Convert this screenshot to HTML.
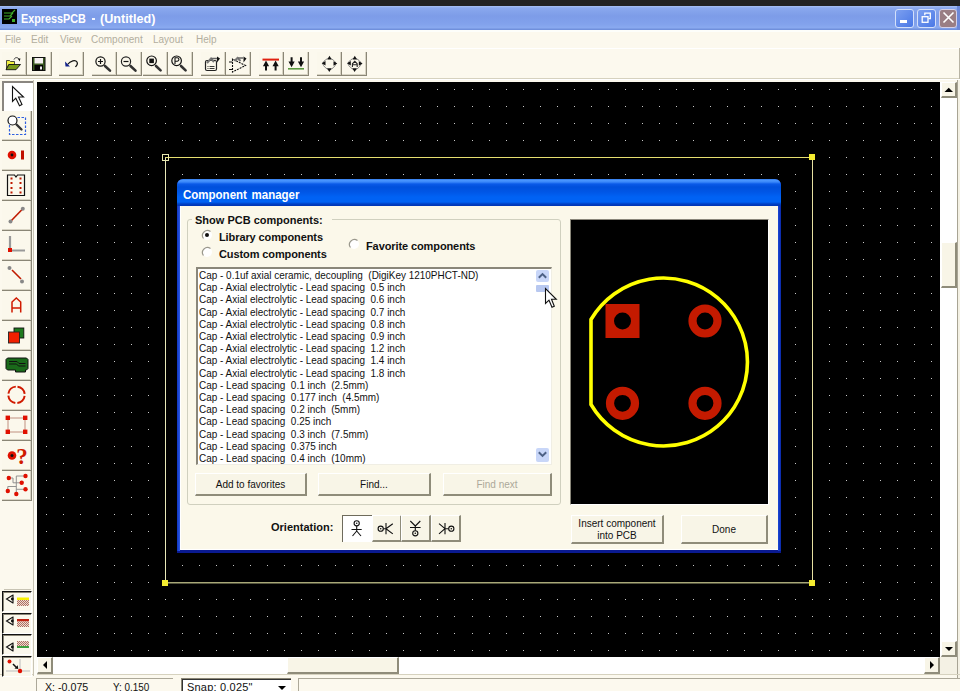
<!DOCTYPE html><html><head><meta charset="utf-8"><style>
*{margin:0;padding:0;box-sizing:border-box}
html,body{width:960px;height:691px;overflow:hidden;background:#fcf9ee;font-family:"Liberation Sans",sans-serif;}
.a{position:absolute}
.t{position:absolute;white-space:pre;line-height:1}
.tb{position:absolute;top:52px;height:24px;border-right:1px solid #8a8676;border-bottom:1px solid #8a8676;box-shadow:inset -1px -1px 0 #d8d4c4;background:#fbf8ec}
.lb{position:absolute;left:2px;width:30px;height:30px;border-right:1px solid #8a8676;border-bottom:1px solid #8a8676;box-shadow:inset -1px -1px 0 #d8d4c4;background:#fbf8ec}
.btn{position:absolute;border-top:1px solid #fff;border-left:1px solid #fff;border-right:2px solid #8f8c7a;border-bottom:2px solid #8f8c7a;background:#f8f5e7;font-size:10px;color:#111;text-align:center;}
.li{position:absolute;left:199px;font-size:11px;white-space:pre;transform:scaleX(0.905);transform-origin:0 0;color:#111;line-height:12px}
svg{position:absolute;overflow:visible}
</style></head><body>
<div class="a" style="left:0;top:0;width:960px;height:6px;background:#222"></div>
<div class="a" style="left:0;top:6px;width:960px;height:24px;background:linear-gradient(#a8c0f4 0px,#8aa8ee 2px,#7d9ce8 10px,#82a2ec 18px,#8aaaf0 22px,#7090dc 23px,#7090dc 24px)"></div>
<div class="a" style="left:957px;top:6px;width:3px;height:24px;background:#6c88d8"></div>
<svg style="left:2px;top:9px" width="15" height="16" viewBox="0 0 15 16"><rect x="0" y="0" width="15" height="15" fill="#000"/><path d="M2 4h8l3-3M2 7h6l3-3M2 10h5l3-3" stroke="#3fae28" stroke-width="1.2" fill="none"/><rect x="10" y="10" width="3" height="3" fill="#3fae28"/></svg>
<div class="t" style="left:21px;top:12px;font-size:13px;font-weight:bold;color:#fff;transform:scaleX(0.83);transform-origin:0 0">ExpressPCB</div>
<div class="a" style="left:92px;top:18px;width:3px;height:2px;background:#f0f4ff"></div>
<div class="t" style="left:99.5px;top:12px;font-size:13px;font-weight:bold;color:#fff;transform:scaleX(0.97);transform-origin:0 0">(Untitled)</div>
<div class="a" style="left:895px;top:9px;width:19px;height:19px;border:1px solid #d4e0fa;border-radius:3px;background:linear-gradient(135deg,#7da0f0,#4a78e6)"></div>
<div class="a" style="left:917px;top:9px;width:19px;height:19px;border:1px solid #d4e0fa;border-radius:3px;background:linear-gradient(135deg,#7da0f0,#4a78e6)"></div>
<div class="a" style="left:939px;top:9px;width:18px;height:19px;border:1px solid #d4d0e8;border-radius:3px;background:#9a7e84"></div>
<div class="a" style="left:900px;top:20px;width:7px;height:3px;background:#fff"></div>
<svg style="left:921px;top:12px" width="12" height="12"><rect x="1.2" y="4.7" width="5.8" height="5.6" fill="none" stroke="#fff" stroke-width="1.3"/><path d="M3.8 3.2V1.2h5.5v5.4H7.5" fill="none" stroke="#fff" stroke-width="1.3"/></svg>
<svg style="left:942px;top:11px" width="14" height="14"><path d="M1.5 1.5l10 10M11.5 1.5l-10 10" stroke="#fff" stroke-width="1.6"/></svg>
<div class="t" style="left:5px;top:35px;font-size:10px;color:#b2ae9e">File</div>
<div class="t" style="left:31px;top:35px;font-size:10px;color:#b2ae9e">Edit</div>
<div class="t" style="left:60px;top:35px;font-size:10px;color:#b2ae9e">View</div>
<div class="t" style="left:91px;top:35px;font-size:10px;color:#b2ae9e">Component</div>
<div class="t" style="left:153px;top:35px;font-size:10px;color:#b2ae9e">Layout</div>
<div class="t" style="left:196px;top:35px;font-size:10px;color:#b2ae9e">Help</div>
<div class="a" style="left:0;top:48px;width:960px;height:1px;background:#fff"></div>
<div class="a" style="left:0;top:30px;width:960px;height:2px;background:#fdfefa"></div>
<div class="a" style="left:0;top:78px;width:960px;height:1px;background:#d6d2bf"></div>
<div class="a" style="left:0;top:79px;width:960px;height:1px;background:#fff"></div>
<div class="tb" style="left:2px;width:25px"></div>
<div class="tb" style="left:27px;width:25px"></div>
<div class="tb" style="left:59px;width:25px"></div>
<div class="tb" style="left:92px;width:25px"></div>
<div class="tb" style="left:117px;width:25px"></div>
<div class="tb" style="left:143px;width:25px"></div>
<div class="tb" style="left:168px;width:25px"></div>
<div class="tb" style="left:201px;width:25px"></div>
<div class="tb" style="left:226px;width:25px"></div>
<div class="tb" style="left:259px;width:25px"></div>
<div class="tb" style="left:284px;width:25px"></div>
<div class="tb" style="left:317px;width:25px"></div>
<div class="tb" style="left:342px;width:25px"></div>
<div class="a" style="left:37px;top:82px;width:903px;height:575px;background:#000"></div>
<svg style="left:0;top:0" width="960" height="691"><path d="M46 89h1v1h-1zM46 106h1v1h-1zM46 123h1v1h-1zM46 140h1v1h-1zM46 157h1v1h-1zM46 174h1v1h-1zM46 191h1v1h-1zM46 208h1v1h-1zM46 225h1v1h-1zM46 242h1v1h-1zM46 259h1v1h-1zM46 276h1v1h-1zM46 293h1v1h-1zM46 310h1v1h-1zM46 327h1v1h-1zM46 344h1v1h-1zM46 361h1v1h-1zM46 378h1v1h-1zM46 395h1v1h-1zM46 412h1v1h-1zM46 429h1v1h-1zM46 446h1v1h-1zM46 463h1v1h-1zM46 480h1v1h-1zM46 497h1v1h-1zM46 514h1v1h-1zM46 531h1v1h-1zM46 548h1v1h-1zM46 565h1v1h-1zM46 582h1v1h-1zM46 599h1v1h-1zM46 616h1v1h-1zM46 633h1v1h-1zM46 650h1v1h-1zM63 89h1v1h-1zM63 106h1v1h-1zM63 123h1v1h-1zM63 140h1v1h-1zM63 157h1v1h-1zM63 174h1v1h-1zM63 191h1v1h-1zM63 208h1v1h-1zM63 225h1v1h-1zM63 242h1v1h-1zM63 259h1v1h-1zM63 276h1v1h-1zM63 293h1v1h-1zM63 310h1v1h-1zM63 327h1v1h-1zM63 344h1v1h-1zM63 361h1v1h-1zM63 378h1v1h-1zM63 395h1v1h-1zM63 412h1v1h-1zM63 429h1v1h-1zM63 446h1v1h-1zM63 463h1v1h-1zM63 480h1v1h-1zM63 497h1v1h-1zM63 514h1v1h-1zM63 531h1v1h-1zM63 548h1v1h-1zM63 565h1v1h-1zM63 582h1v1h-1zM63 599h1v1h-1zM63 616h1v1h-1zM63 633h1v1h-1zM63 650h1v1h-1zM80 89h1v1h-1zM80 106h1v1h-1zM80 123h1v1h-1zM80 140h1v1h-1zM80 157h1v1h-1zM80 174h1v1h-1zM80 191h1v1h-1zM80 208h1v1h-1zM80 225h1v1h-1zM80 242h1v1h-1zM80 259h1v1h-1zM80 276h1v1h-1zM80 293h1v1h-1zM80 310h1v1h-1zM80 327h1v1h-1zM80 344h1v1h-1zM80 361h1v1h-1zM80 378h1v1h-1zM80 395h1v1h-1zM80 412h1v1h-1zM80 429h1v1h-1zM80 446h1v1h-1zM80 463h1v1h-1zM80 480h1v1h-1zM80 497h1v1h-1zM80 514h1v1h-1zM80 531h1v1h-1zM80 548h1v1h-1zM80 565h1v1h-1zM80 582h1v1h-1zM80 599h1v1h-1zM80 616h1v1h-1zM80 633h1v1h-1zM80 650h1v1h-1zM97 89h1v1h-1zM97 106h1v1h-1zM97 123h1v1h-1zM97 140h1v1h-1zM97 157h1v1h-1zM97 174h1v1h-1zM97 191h1v1h-1zM97 208h1v1h-1zM97 225h1v1h-1zM97 242h1v1h-1zM97 259h1v1h-1zM97 276h1v1h-1zM97 293h1v1h-1zM97 310h1v1h-1zM97 327h1v1h-1zM97 344h1v1h-1zM97 361h1v1h-1zM97 378h1v1h-1zM97 395h1v1h-1zM97 412h1v1h-1zM97 429h1v1h-1zM97 446h1v1h-1zM97 463h1v1h-1zM97 480h1v1h-1zM97 497h1v1h-1zM97 514h1v1h-1zM97 531h1v1h-1zM97 548h1v1h-1zM97 565h1v1h-1zM97 582h1v1h-1zM97 599h1v1h-1zM97 616h1v1h-1zM97 633h1v1h-1zM97 650h1v1h-1zM114 89h1v1h-1zM114 106h1v1h-1zM114 123h1v1h-1zM114 140h1v1h-1zM114 157h1v1h-1zM114 174h1v1h-1zM114 191h1v1h-1zM114 208h1v1h-1zM114 225h1v1h-1zM114 242h1v1h-1zM114 259h1v1h-1zM114 276h1v1h-1zM114 293h1v1h-1zM114 310h1v1h-1zM114 327h1v1h-1zM114 344h1v1h-1zM114 361h1v1h-1zM114 378h1v1h-1zM114 395h1v1h-1zM114 412h1v1h-1zM114 429h1v1h-1zM114 446h1v1h-1zM114 463h1v1h-1zM114 480h1v1h-1zM114 497h1v1h-1zM114 514h1v1h-1zM114 531h1v1h-1zM114 548h1v1h-1zM114 565h1v1h-1zM114 582h1v1h-1zM114 599h1v1h-1zM114 616h1v1h-1zM114 633h1v1h-1zM114 650h1v1h-1zM131 89h1v1h-1zM131 106h1v1h-1zM131 123h1v1h-1zM131 140h1v1h-1zM131 157h1v1h-1zM131 174h1v1h-1zM131 191h1v1h-1zM131 208h1v1h-1zM131 225h1v1h-1zM131 242h1v1h-1zM131 259h1v1h-1zM131 276h1v1h-1zM131 293h1v1h-1zM131 310h1v1h-1zM131 327h1v1h-1zM131 344h1v1h-1zM131 361h1v1h-1zM131 378h1v1h-1zM131 395h1v1h-1zM131 412h1v1h-1zM131 429h1v1h-1zM131 446h1v1h-1zM131 463h1v1h-1zM131 480h1v1h-1zM131 497h1v1h-1zM131 514h1v1h-1zM131 531h1v1h-1zM131 548h1v1h-1zM131 565h1v1h-1zM131 582h1v1h-1zM131 599h1v1h-1zM131 616h1v1h-1zM131 633h1v1h-1zM131 650h1v1h-1zM148 89h1v1h-1zM148 106h1v1h-1zM148 123h1v1h-1zM148 140h1v1h-1zM148 157h1v1h-1zM148 174h1v1h-1zM148 191h1v1h-1zM148 208h1v1h-1zM148 225h1v1h-1zM148 242h1v1h-1zM148 259h1v1h-1zM148 276h1v1h-1zM148 293h1v1h-1zM148 310h1v1h-1zM148 327h1v1h-1zM148 344h1v1h-1zM148 361h1v1h-1zM148 378h1v1h-1zM148 395h1v1h-1zM148 412h1v1h-1zM148 429h1v1h-1zM148 446h1v1h-1zM148 463h1v1h-1zM148 480h1v1h-1zM148 497h1v1h-1zM148 514h1v1h-1zM148 531h1v1h-1zM148 548h1v1h-1zM148 565h1v1h-1zM148 582h1v1h-1zM148 599h1v1h-1zM148 616h1v1h-1zM148 633h1v1h-1zM148 650h1v1h-1zM165 89h1v1h-1zM165 106h1v1h-1zM165 123h1v1h-1zM165 140h1v1h-1zM165 157h1v1h-1zM165 174h1v1h-1zM165 191h1v1h-1zM165 208h1v1h-1zM165 225h1v1h-1zM165 242h1v1h-1zM165 259h1v1h-1zM165 276h1v1h-1zM165 293h1v1h-1zM165 310h1v1h-1zM165 327h1v1h-1zM165 344h1v1h-1zM165 361h1v1h-1zM165 378h1v1h-1zM165 395h1v1h-1zM165 412h1v1h-1zM165 429h1v1h-1zM165 446h1v1h-1zM165 463h1v1h-1zM165 480h1v1h-1zM165 497h1v1h-1zM165 514h1v1h-1zM165 531h1v1h-1zM165 548h1v1h-1zM165 565h1v1h-1zM165 582h1v1h-1zM165 599h1v1h-1zM165 616h1v1h-1zM165 633h1v1h-1zM165 650h1v1h-1zM182 89h1v1h-1zM182 106h1v1h-1zM182 123h1v1h-1zM182 140h1v1h-1zM182 157h1v1h-1zM182 174h1v1h-1zM182 191h1v1h-1zM182 208h1v1h-1zM182 225h1v1h-1zM182 242h1v1h-1zM182 259h1v1h-1zM182 276h1v1h-1zM182 293h1v1h-1zM182 310h1v1h-1zM182 327h1v1h-1zM182 344h1v1h-1zM182 361h1v1h-1zM182 378h1v1h-1zM182 395h1v1h-1zM182 412h1v1h-1zM182 429h1v1h-1zM182 446h1v1h-1zM182 463h1v1h-1zM182 480h1v1h-1zM182 497h1v1h-1zM182 514h1v1h-1zM182 531h1v1h-1zM182 548h1v1h-1zM182 565h1v1h-1zM182 582h1v1h-1zM182 599h1v1h-1zM182 616h1v1h-1zM182 633h1v1h-1zM182 650h1v1h-1zM199 89h1v1h-1zM199 106h1v1h-1zM199 123h1v1h-1zM199 140h1v1h-1zM199 157h1v1h-1zM199 174h1v1h-1zM199 191h1v1h-1zM199 208h1v1h-1zM199 225h1v1h-1zM199 242h1v1h-1zM199 259h1v1h-1zM199 276h1v1h-1zM199 293h1v1h-1zM199 310h1v1h-1zM199 327h1v1h-1zM199 344h1v1h-1zM199 361h1v1h-1zM199 378h1v1h-1zM199 395h1v1h-1zM199 412h1v1h-1zM199 429h1v1h-1zM199 446h1v1h-1zM199 463h1v1h-1zM199 480h1v1h-1zM199 497h1v1h-1zM199 514h1v1h-1zM199 531h1v1h-1zM199 548h1v1h-1zM199 565h1v1h-1zM199 582h1v1h-1zM199 599h1v1h-1zM199 616h1v1h-1zM199 633h1v1h-1zM199 650h1v1h-1zM216 89h1v1h-1zM216 106h1v1h-1zM216 123h1v1h-1zM216 140h1v1h-1zM216 157h1v1h-1zM216 174h1v1h-1zM216 191h1v1h-1zM216 208h1v1h-1zM216 225h1v1h-1zM216 242h1v1h-1zM216 259h1v1h-1zM216 276h1v1h-1zM216 293h1v1h-1zM216 310h1v1h-1zM216 327h1v1h-1zM216 344h1v1h-1zM216 361h1v1h-1zM216 378h1v1h-1zM216 395h1v1h-1zM216 412h1v1h-1zM216 429h1v1h-1zM216 446h1v1h-1zM216 463h1v1h-1zM216 480h1v1h-1zM216 497h1v1h-1zM216 514h1v1h-1zM216 531h1v1h-1zM216 548h1v1h-1zM216 565h1v1h-1zM216 582h1v1h-1zM216 599h1v1h-1zM216 616h1v1h-1zM216 633h1v1h-1zM216 650h1v1h-1zM233 89h1v1h-1zM233 106h1v1h-1zM233 123h1v1h-1zM233 140h1v1h-1zM233 157h1v1h-1zM233 174h1v1h-1zM233 191h1v1h-1zM233 208h1v1h-1zM233 225h1v1h-1zM233 242h1v1h-1zM233 259h1v1h-1zM233 276h1v1h-1zM233 293h1v1h-1zM233 310h1v1h-1zM233 327h1v1h-1zM233 344h1v1h-1zM233 361h1v1h-1zM233 378h1v1h-1zM233 395h1v1h-1zM233 412h1v1h-1zM233 429h1v1h-1zM233 446h1v1h-1zM233 463h1v1h-1zM233 480h1v1h-1zM233 497h1v1h-1zM233 514h1v1h-1zM233 531h1v1h-1zM233 548h1v1h-1zM233 565h1v1h-1zM233 582h1v1h-1zM233 599h1v1h-1zM233 616h1v1h-1zM233 633h1v1h-1zM233 650h1v1h-1zM250 89h1v1h-1zM250 106h1v1h-1zM250 123h1v1h-1zM250 140h1v1h-1zM250 157h1v1h-1zM250 174h1v1h-1zM250 191h1v1h-1zM250 208h1v1h-1zM250 225h1v1h-1zM250 242h1v1h-1zM250 259h1v1h-1zM250 276h1v1h-1zM250 293h1v1h-1zM250 310h1v1h-1zM250 327h1v1h-1zM250 344h1v1h-1zM250 361h1v1h-1zM250 378h1v1h-1zM250 395h1v1h-1zM250 412h1v1h-1zM250 429h1v1h-1zM250 446h1v1h-1zM250 463h1v1h-1zM250 480h1v1h-1zM250 497h1v1h-1zM250 514h1v1h-1zM250 531h1v1h-1zM250 548h1v1h-1zM250 565h1v1h-1zM250 582h1v1h-1zM250 599h1v1h-1zM250 616h1v1h-1zM250 633h1v1h-1zM250 650h1v1h-1zM267 89h1v1h-1zM267 106h1v1h-1zM267 123h1v1h-1zM267 140h1v1h-1zM267 157h1v1h-1zM267 174h1v1h-1zM267 191h1v1h-1zM267 208h1v1h-1zM267 225h1v1h-1zM267 242h1v1h-1zM267 259h1v1h-1zM267 276h1v1h-1zM267 293h1v1h-1zM267 310h1v1h-1zM267 327h1v1h-1zM267 344h1v1h-1zM267 361h1v1h-1zM267 378h1v1h-1zM267 395h1v1h-1zM267 412h1v1h-1zM267 429h1v1h-1zM267 446h1v1h-1zM267 463h1v1h-1zM267 480h1v1h-1zM267 497h1v1h-1zM267 514h1v1h-1zM267 531h1v1h-1zM267 548h1v1h-1zM267 565h1v1h-1zM267 582h1v1h-1zM267 599h1v1h-1zM267 616h1v1h-1zM267 633h1v1h-1zM267 650h1v1h-1zM284 89h1v1h-1zM284 106h1v1h-1zM284 123h1v1h-1zM284 140h1v1h-1zM284 157h1v1h-1zM284 174h1v1h-1zM284 191h1v1h-1zM284 208h1v1h-1zM284 225h1v1h-1zM284 242h1v1h-1zM284 259h1v1h-1zM284 276h1v1h-1zM284 293h1v1h-1zM284 310h1v1h-1zM284 327h1v1h-1zM284 344h1v1h-1zM284 361h1v1h-1zM284 378h1v1h-1zM284 395h1v1h-1zM284 412h1v1h-1zM284 429h1v1h-1zM284 446h1v1h-1zM284 463h1v1h-1zM284 480h1v1h-1zM284 497h1v1h-1zM284 514h1v1h-1zM284 531h1v1h-1zM284 548h1v1h-1zM284 565h1v1h-1zM284 582h1v1h-1zM284 599h1v1h-1zM284 616h1v1h-1zM284 633h1v1h-1zM284 650h1v1h-1zM301 89h1v1h-1zM301 106h1v1h-1zM301 123h1v1h-1zM301 140h1v1h-1zM301 157h1v1h-1zM301 174h1v1h-1zM301 191h1v1h-1zM301 208h1v1h-1zM301 225h1v1h-1zM301 242h1v1h-1zM301 259h1v1h-1zM301 276h1v1h-1zM301 293h1v1h-1zM301 310h1v1h-1zM301 327h1v1h-1zM301 344h1v1h-1zM301 361h1v1h-1zM301 378h1v1h-1zM301 395h1v1h-1zM301 412h1v1h-1zM301 429h1v1h-1zM301 446h1v1h-1zM301 463h1v1h-1zM301 480h1v1h-1zM301 497h1v1h-1zM301 514h1v1h-1zM301 531h1v1h-1zM301 548h1v1h-1zM301 565h1v1h-1zM301 582h1v1h-1zM301 599h1v1h-1zM301 616h1v1h-1zM301 633h1v1h-1zM301 650h1v1h-1zM318 89h1v1h-1zM318 106h1v1h-1zM318 123h1v1h-1zM318 140h1v1h-1zM318 157h1v1h-1zM318 174h1v1h-1zM318 191h1v1h-1zM318 208h1v1h-1zM318 225h1v1h-1zM318 242h1v1h-1zM318 259h1v1h-1zM318 276h1v1h-1zM318 293h1v1h-1zM318 310h1v1h-1zM318 327h1v1h-1zM318 344h1v1h-1zM318 361h1v1h-1zM318 378h1v1h-1zM318 395h1v1h-1zM318 412h1v1h-1zM318 429h1v1h-1zM318 446h1v1h-1zM318 463h1v1h-1zM318 480h1v1h-1zM318 497h1v1h-1zM318 514h1v1h-1zM318 531h1v1h-1zM318 548h1v1h-1zM318 565h1v1h-1zM318 582h1v1h-1zM318 599h1v1h-1zM318 616h1v1h-1zM318 633h1v1h-1zM318 650h1v1h-1zM335 89h1v1h-1zM335 106h1v1h-1zM335 123h1v1h-1zM335 140h1v1h-1zM335 157h1v1h-1zM335 174h1v1h-1zM335 191h1v1h-1zM335 208h1v1h-1zM335 225h1v1h-1zM335 242h1v1h-1zM335 259h1v1h-1zM335 276h1v1h-1zM335 293h1v1h-1zM335 310h1v1h-1zM335 327h1v1h-1zM335 344h1v1h-1zM335 361h1v1h-1zM335 378h1v1h-1zM335 395h1v1h-1zM335 412h1v1h-1zM335 429h1v1h-1zM335 446h1v1h-1zM335 463h1v1h-1zM335 480h1v1h-1zM335 497h1v1h-1zM335 514h1v1h-1zM335 531h1v1h-1zM335 548h1v1h-1zM335 565h1v1h-1zM335 582h1v1h-1zM335 599h1v1h-1zM335 616h1v1h-1zM335 633h1v1h-1zM335 650h1v1h-1zM352 89h1v1h-1zM352 106h1v1h-1zM352 123h1v1h-1zM352 140h1v1h-1zM352 157h1v1h-1zM352 174h1v1h-1zM352 191h1v1h-1zM352 208h1v1h-1zM352 225h1v1h-1zM352 242h1v1h-1zM352 259h1v1h-1zM352 276h1v1h-1zM352 293h1v1h-1zM352 310h1v1h-1zM352 327h1v1h-1zM352 344h1v1h-1zM352 361h1v1h-1zM352 378h1v1h-1zM352 395h1v1h-1zM352 412h1v1h-1zM352 429h1v1h-1zM352 446h1v1h-1zM352 463h1v1h-1zM352 480h1v1h-1zM352 497h1v1h-1zM352 514h1v1h-1zM352 531h1v1h-1zM352 548h1v1h-1zM352 565h1v1h-1zM352 582h1v1h-1zM352 599h1v1h-1zM352 616h1v1h-1zM352 633h1v1h-1zM352 650h1v1h-1zM369 89h1v1h-1zM369 106h1v1h-1zM369 123h1v1h-1zM369 140h1v1h-1zM369 157h1v1h-1zM369 174h1v1h-1zM369 191h1v1h-1zM369 208h1v1h-1zM369 225h1v1h-1zM369 242h1v1h-1zM369 259h1v1h-1zM369 276h1v1h-1zM369 293h1v1h-1zM369 310h1v1h-1zM369 327h1v1h-1zM369 344h1v1h-1zM369 361h1v1h-1zM369 378h1v1h-1zM369 395h1v1h-1zM369 412h1v1h-1zM369 429h1v1h-1zM369 446h1v1h-1zM369 463h1v1h-1zM369 480h1v1h-1zM369 497h1v1h-1zM369 514h1v1h-1zM369 531h1v1h-1zM369 548h1v1h-1zM369 565h1v1h-1zM369 582h1v1h-1zM369 599h1v1h-1zM369 616h1v1h-1zM369 633h1v1h-1zM369 650h1v1h-1zM386 89h1v1h-1zM386 106h1v1h-1zM386 123h1v1h-1zM386 140h1v1h-1zM386 157h1v1h-1zM386 174h1v1h-1zM386 191h1v1h-1zM386 208h1v1h-1zM386 225h1v1h-1zM386 242h1v1h-1zM386 259h1v1h-1zM386 276h1v1h-1zM386 293h1v1h-1zM386 310h1v1h-1zM386 327h1v1h-1zM386 344h1v1h-1zM386 361h1v1h-1zM386 378h1v1h-1zM386 395h1v1h-1zM386 412h1v1h-1zM386 429h1v1h-1zM386 446h1v1h-1zM386 463h1v1h-1zM386 480h1v1h-1zM386 497h1v1h-1zM386 514h1v1h-1zM386 531h1v1h-1zM386 548h1v1h-1zM386 565h1v1h-1zM386 582h1v1h-1zM386 599h1v1h-1zM386 616h1v1h-1zM386 633h1v1h-1zM386 650h1v1h-1zM403 89h1v1h-1zM403 106h1v1h-1zM403 123h1v1h-1zM403 140h1v1h-1zM403 157h1v1h-1zM403 174h1v1h-1zM403 191h1v1h-1zM403 208h1v1h-1zM403 225h1v1h-1zM403 242h1v1h-1zM403 259h1v1h-1zM403 276h1v1h-1zM403 293h1v1h-1zM403 310h1v1h-1zM403 327h1v1h-1zM403 344h1v1h-1zM403 361h1v1h-1zM403 378h1v1h-1zM403 395h1v1h-1zM403 412h1v1h-1zM403 429h1v1h-1zM403 446h1v1h-1zM403 463h1v1h-1zM403 480h1v1h-1zM403 497h1v1h-1zM403 514h1v1h-1zM403 531h1v1h-1zM403 548h1v1h-1zM403 565h1v1h-1zM403 582h1v1h-1zM403 599h1v1h-1zM403 616h1v1h-1zM403 633h1v1h-1zM403 650h1v1h-1zM420 89h1v1h-1zM420 106h1v1h-1zM420 123h1v1h-1zM420 140h1v1h-1zM420 157h1v1h-1zM420 174h1v1h-1zM420 191h1v1h-1zM420 208h1v1h-1zM420 225h1v1h-1zM420 242h1v1h-1zM420 259h1v1h-1zM420 276h1v1h-1zM420 293h1v1h-1zM420 310h1v1h-1zM420 327h1v1h-1zM420 344h1v1h-1zM420 361h1v1h-1zM420 378h1v1h-1zM420 395h1v1h-1zM420 412h1v1h-1zM420 429h1v1h-1zM420 446h1v1h-1zM420 463h1v1h-1zM420 480h1v1h-1zM420 497h1v1h-1zM420 514h1v1h-1zM420 531h1v1h-1zM420 548h1v1h-1zM420 565h1v1h-1zM420 582h1v1h-1zM420 599h1v1h-1zM420 616h1v1h-1zM420 633h1v1h-1zM420 650h1v1h-1zM437 89h1v1h-1zM437 106h1v1h-1zM437 123h1v1h-1zM437 140h1v1h-1zM437 157h1v1h-1zM437 174h1v1h-1zM437 191h1v1h-1zM437 208h1v1h-1zM437 225h1v1h-1zM437 242h1v1h-1zM437 259h1v1h-1zM437 276h1v1h-1zM437 293h1v1h-1zM437 310h1v1h-1zM437 327h1v1h-1zM437 344h1v1h-1zM437 361h1v1h-1zM437 378h1v1h-1zM437 395h1v1h-1zM437 412h1v1h-1zM437 429h1v1h-1zM437 446h1v1h-1zM437 463h1v1h-1zM437 480h1v1h-1zM437 497h1v1h-1zM437 514h1v1h-1zM437 531h1v1h-1zM437 548h1v1h-1zM437 565h1v1h-1zM437 582h1v1h-1zM437 599h1v1h-1zM437 616h1v1h-1zM437 633h1v1h-1zM437 650h1v1h-1zM454 89h1v1h-1zM454 106h1v1h-1zM454 123h1v1h-1zM454 140h1v1h-1zM454 157h1v1h-1zM454 174h1v1h-1zM454 191h1v1h-1zM454 208h1v1h-1zM454 225h1v1h-1zM454 242h1v1h-1zM454 259h1v1h-1zM454 276h1v1h-1zM454 293h1v1h-1zM454 310h1v1h-1zM454 327h1v1h-1zM454 344h1v1h-1zM454 361h1v1h-1zM454 378h1v1h-1zM454 395h1v1h-1zM454 412h1v1h-1zM454 429h1v1h-1zM454 446h1v1h-1zM454 463h1v1h-1zM454 480h1v1h-1zM454 497h1v1h-1zM454 514h1v1h-1zM454 531h1v1h-1zM454 548h1v1h-1zM454 565h1v1h-1zM454 582h1v1h-1zM454 599h1v1h-1zM454 616h1v1h-1zM454 633h1v1h-1zM454 650h1v1h-1zM472 89h1v1h-1zM472 106h1v1h-1zM472 123h1v1h-1zM472 140h1v1h-1zM472 157h1v1h-1zM472 174h1v1h-1zM472 191h1v1h-1zM472 208h1v1h-1zM472 225h1v1h-1zM472 242h1v1h-1zM472 259h1v1h-1zM472 276h1v1h-1zM472 293h1v1h-1zM472 310h1v1h-1zM472 327h1v1h-1zM472 344h1v1h-1zM472 361h1v1h-1zM472 378h1v1h-1zM472 395h1v1h-1zM472 412h1v1h-1zM472 429h1v1h-1zM472 446h1v1h-1zM472 463h1v1h-1zM472 480h1v1h-1zM472 497h1v1h-1zM472 514h1v1h-1zM472 531h1v1h-1zM472 548h1v1h-1zM472 565h1v1h-1zM472 582h1v1h-1zM472 599h1v1h-1zM472 616h1v1h-1zM472 633h1v1h-1zM472 650h1v1h-1zM489 89h1v1h-1zM489 106h1v1h-1zM489 123h1v1h-1zM489 140h1v1h-1zM489 157h1v1h-1zM489 174h1v1h-1zM489 191h1v1h-1zM489 208h1v1h-1zM489 225h1v1h-1zM489 242h1v1h-1zM489 259h1v1h-1zM489 276h1v1h-1zM489 293h1v1h-1zM489 310h1v1h-1zM489 327h1v1h-1zM489 344h1v1h-1zM489 361h1v1h-1zM489 378h1v1h-1zM489 395h1v1h-1zM489 412h1v1h-1zM489 429h1v1h-1zM489 446h1v1h-1zM489 463h1v1h-1zM489 480h1v1h-1zM489 497h1v1h-1zM489 514h1v1h-1zM489 531h1v1h-1zM489 548h1v1h-1zM489 565h1v1h-1zM489 582h1v1h-1zM489 599h1v1h-1zM489 616h1v1h-1zM489 633h1v1h-1zM489 650h1v1h-1zM506 89h1v1h-1zM506 106h1v1h-1zM506 123h1v1h-1zM506 140h1v1h-1zM506 157h1v1h-1zM506 174h1v1h-1zM506 191h1v1h-1zM506 208h1v1h-1zM506 225h1v1h-1zM506 242h1v1h-1zM506 259h1v1h-1zM506 276h1v1h-1zM506 293h1v1h-1zM506 310h1v1h-1zM506 327h1v1h-1zM506 344h1v1h-1zM506 361h1v1h-1zM506 378h1v1h-1zM506 395h1v1h-1zM506 412h1v1h-1zM506 429h1v1h-1zM506 446h1v1h-1zM506 463h1v1h-1zM506 480h1v1h-1zM506 497h1v1h-1zM506 514h1v1h-1zM506 531h1v1h-1zM506 548h1v1h-1zM506 565h1v1h-1zM506 582h1v1h-1zM506 599h1v1h-1zM506 616h1v1h-1zM506 633h1v1h-1zM506 650h1v1h-1zM523 89h1v1h-1zM523 106h1v1h-1zM523 123h1v1h-1zM523 140h1v1h-1zM523 157h1v1h-1zM523 174h1v1h-1zM523 191h1v1h-1zM523 208h1v1h-1zM523 225h1v1h-1zM523 242h1v1h-1zM523 259h1v1h-1zM523 276h1v1h-1zM523 293h1v1h-1zM523 310h1v1h-1zM523 327h1v1h-1zM523 344h1v1h-1zM523 361h1v1h-1zM523 378h1v1h-1zM523 395h1v1h-1zM523 412h1v1h-1zM523 429h1v1h-1zM523 446h1v1h-1zM523 463h1v1h-1zM523 480h1v1h-1zM523 497h1v1h-1zM523 514h1v1h-1zM523 531h1v1h-1zM523 548h1v1h-1zM523 565h1v1h-1zM523 582h1v1h-1zM523 599h1v1h-1zM523 616h1v1h-1zM523 633h1v1h-1zM523 650h1v1h-1zM540 89h1v1h-1zM540 106h1v1h-1zM540 123h1v1h-1zM540 140h1v1h-1zM540 157h1v1h-1zM540 174h1v1h-1zM540 191h1v1h-1zM540 208h1v1h-1zM540 225h1v1h-1zM540 242h1v1h-1zM540 259h1v1h-1zM540 276h1v1h-1zM540 293h1v1h-1zM540 310h1v1h-1zM540 327h1v1h-1zM540 344h1v1h-1zM540 361h1v1h-1zM540 378h1v1h-1zM540 395h1v1h-1zM540 412h1v1h-1zM540 429h1v1h-1zM540 446h1v1h-1zM540 463h1v1h-1zM540 480h1v1h-1zM540 497h1v1h-1zM540 514h1v1h-1zM540 531h1v1h-1zM540 548h1v1h-1zM540 565h1v1h-1zM540 582h1v1h-1zM540 599h1v1h-1zM540 616h1v1h-1zM540 633h1v1h-1zM540 650h1v1h-1zM557 89h1v1h-1zM557 106h1v1h-1zM557 123h1v1h-1zM557 140h1v1h-1zM557 157h1v1h-1zM557 174h1v1h-1zM557 191h1v1h-1zM557 208h1v1h-1zM557 225h1v1h-1zM557 242h1v1h-1zM557 259h1v1h-1zM557 276h1v1h-1zM557 293h1v1h-1zM557 310h1v1h-1zM557 327h1v1h-1zM557 344h1v1h-1zM557 361h1v1h-1zM557 378h1v1h-1zM557 395h1v1h-1zM557 412h1v1h-1zM557 429h1v1h-1zM557 446h1v1h-1zM557 463h1v1h-1zM557 480h1v1h-1zM557 497h1v1h-1zM557 514h1v1h-1zM557 531h1v1h-1zM557 548h1v1h-1zM557 565h1v1h-1zM557 582h1v1h-1zM557 599h1v1h-1zM557 616h1v1h-1zM557 633h1v1h-1zM557 650h1v1h-1zM574 89h1v1h-1zM574 106h1v1h-1zM574 123h1v1h-1zM574 140h1v1h-1zM574 157h1v1h-1zM574 174h1v1h-1zM574 191h1v1h-1zM574 208h1v1h-1zM574 225h1v1h-1zM574 242h1v1h-1zM574 259h1v1h-1zM574 276h1v1h-1zM574 293h1v1h-1zM574 310h1v1h-1zM574 327h1v1h-1zM574 344h1v1h-1zM574 361h1v1h-1zM574 378h1v1h-1zM574 395h1v1h-1zM574 412h1v1h-1zM574 429h1v1h-1zM574 446h1v1h-1zM574 463h1v1h-1zM574 480h1v1h-1zM574 497h1v1h-1zM574 514h1v1h-1zM574 531h1v1h-1zM574 548h1v1h-1zM574 565h1v1h-1zM574 582h1v1h-1zM574 599h1v1h-1zM574 616h1v1h-1zM574 633h1v1h-1zM574 650h1v1h-1zM591 89h1v1h-1zM591 106h1v1h-1zM591 123h1v1h-1zM591 140h1v1h-1zM591 157h1v1h-1zM591 174h1v1h-1zM591 191h1v1h-1zM591 208h1v1h-1zM591 225h1v1h-1zM591 242h1v1h-1zM591 259h1v1h-1zM591 276h1v1h-1zM591 293h1v1h-1zM591 310h1v1h-1zM591 327h1v1h-1zM591 344h1v1h-1zM591 361h1v1h-1zM591 378h1v1h-1zM591 395h1v1h-1zM591 412h1v1h-1zM591 429h1v1h-1zM591 446h1v1h-1zM591 463h1v1h-1zM591 480h1v1h-1zM591 497h1v1h-1zM591 514h1v1h-1zM591 531h1v1h-1zM591 548h1v1h-1zM591 565h1v1h-1zM591 582h1v1h-1zM591 599h1v1h-1zM591 616h1v1h-1zM591 633h1v1h-1zM591 650h1v1h-1zM608 89h1v1h-1zM608 106h1v1h-1zM608 123h1v1h-1zM608 140h1v1h-1zM608 157h1v1h-1zM608 174h1v1h-1zM608 191h1v1h-1zM608 208h1v1h-1zM608 225h1v1h-1zM608 242h1v1h-1zM608 259h1v1h-1zM608 276h1v1h-1zM608 293h1v1h-1zM608 310h1v1h-1zM608 327h1v1h-1zM608 344h1v1h-1zM608 361h1v1h-1zM608 378h1v1h-1zM608 395h1v1h-1zM608 412h1v1h-1zM608 429h1v1h-1zM608 446h1v1h-1zM608 463h1v1h-1zM608 480h1v1h-1zM608 497h1v1h-1zM608 514h1v1h-1zM608 531h1v1h-1zM608 548h1v1h-1zM608 565h1v1h-1zM608 582h1v1h-1zM608 599h1v1h-1zM608 616h1v1h-1zM608 633h1v1h-1zM608 650h1v1h-1zM625 89h1v1h-1zM625 106h1v1h-1zM625 123h1v1h-1zM625 140h1v1h-1zM625 157h1v1h-1zM625 174h1v1h-1zM625 191h1v1h-1zM625 208h1v1h-1zM625 225h1v1h-1zM625 242h1v1h-1zM625 259h1v1h-1zM625 276h1v1h-1zM625 293h1v1h-1zM625 310h1v1h-1zM625 327h1v1h-1zM625 344h1v1h-1zM625 361h1v1h-1zM625 378h1v1h-1zM625 395h1v1h-1zM625 412h1v1h-1zM625 429h1v1h-1zM625 446h1v1h-1zM625 463h1v1h-1zM625 480h1v1h-1zM625 497h1v1h-1zM625 514h1v1h-1zM625 531h1v1h-1zM625 548h1v1h-1zM625 565h1v1h-1zM625 582h1v1h-1zM625 599h1v1h-1zM625 616h1v1h-1zM625 633h1v1h-1zM625 650h1v1h-1zM642 89h1v1h-1zM642 106h1v1h-1zM642 123h1v1h-1zM642 140h1v1h-1zM642 157h1v1h-1zM642 174h1v1h-1zM642 191h1v1h-1zM642 208h1v1h-1zM642 225h1v1h-1zM642 242h1v1h-1zM642 259h1v1h-1zM642 276h1v1h-1zM642 293h1v1h-1zM642 310h1v1h-1zM642 327h1v1h-1zM642 344h1v1h-1zM642 361h1v1h-1zM642 378h1v1h-1zM642 395h1v1h-1zM642 412h1v1h-1zM642 429h1v1h-1zM642 446h1v1h-1zM642 463h1v1h-1zM642 480h1v1h-1zM642 497h1v1h-1zM642 514h1v1h-1zM642 531h1v1h-1zM642 548h1v1h-1zM642 565h1v1h-1zM642 582h1v1h-1zM642 599h1v1h-1zM642 616h1v1h-1zM642 633h1v1h-1zM642 650h1v1h-1zM659 89h1v1h-1zM659 106h1v1h-1zM659 123h1v1h-1zM659 140h1v1h-1zM659 157h1v1h-1zM659 174h1v1h-1zM659 191h1v1h-1zM659 208h1v1h-1zM659 225h1v1h-1zM659 242h1v1h-1zM659 259h1v1h-1zM659 276h1v1h-1zM659 293h1v1h-1zM659 310h1v1h-1zM659 327h1v1h-1zM659 344h1v1h-1zM659 361h1v1h-1zM659 378h1v1h-1zM659 395h1v1h-1zM659 412h1v1h-1zM659 429h1v1h-1zM659 446h1v1h-1zM659 463h1v1h-1zM659 480h1v1h-1zM659 497h1v1h-1zM659 514h1v1h-1zM659 531h1v1h-1zM659 548h1v1h-1zM659 565h1v1h-1zM659 582h1v1h-1zM659 599h1v1h-1zM659 616h1v1h-1zM659 633h1v1h-1zM659 650h1v1h-1zM676 89h1v1h-1zM676 106h1v1h-1zM676 123h1v1h-1zM676 140h1v1h-1zM676 157h1v1h-1zM676 174h1v1h-1zM676 191h1v1h-1zM676 208h1v1h-1zM676 225h1v1h-1zM676 242h1v1h-1zM676 259h1v1h-1zM676 276h1v1h-1zM676 293h1v1h-1zM676 310h1v1h-1zM676 327h1v1h-1zM676 344h1v1h-1zM676 361h1v1h-1zM676 378h1v1h-1zM676 395h1v1h-1zM676 412h1v1h-1zM676 429h1v1h-1zM676 446h1v1h-1zM676 463h1v1h-1zM676 480h1v1h-1zM676 497h1v1h-1zM676 514h1v1h-1zM676 531h1v1h-1zM676 548h1v1h-1zM676 565h1v1h-1zM676 582h1v1h-1zM676 599h1v1h-1zM676 616h1v1h-1zM676 633h1v1h-1zM676 650h1v1h-1zM693 89h1v1h-1zM693 106h1v1h-1zM693 123h1v1h-1zM693 140h1v1h-1zM693 157h1v1h-1zM693 174h1v1h-1zM693 191h1v1h-1zM693 208h1v1h-1zM693 225h1v1h-1zM693 242h1v1h-1zM693 259h1v1h-1zM693 276h1v1h-1zM693 293h1v1h-1zM693 310h1v1h-1zM693 327h1v1h-1zM693 344h1v1h-1zM693 361h1v1h-1zM693 378h1v1h-1zM693 395h1v1h-1zM693 412h1v1h-1zM693 429h1v1h-1zM693 446h1v1h-1zM693 463h1v1h-1zM693 480h1v1h-1zM693 497h1v1h-1zM693 514h1v1h-1zM693 531h1v1h-1zM693 548h1v1h-1zM693 565h1v1h-1zM693 582h1v1h-1zM693 599h1v1h-1zM693 616h1v1h-1zM693 633h1v1h-1zM693 650h1v1h-1zM710 89h1v1h-1zM710 106h1v1h-1zM710 123h1v1h-1zM710 140h1v1h-1zM710 157h1v1h-1zM710 174h1v1h-1zM710 191h1v1h-1zM710 208h1v1h-1zM710 225h1v1h-1zM710 242h1v1h-1zM710 259h1v1h-1zM710 276h1v1h-1zM710 293h1v1h-1zM710 310h1v1h-1zM710 327h1v1h-1zM710 344h1v1h-1zM710 361h1v1h-1zM710 378h1v1h-1zM710 395h1v1h-1zM710 412h1v1h-1zM710 429h1v1h-1zM710 446h1v1h-1zM710 463h1v1h-1zM710 480h1v1h-1zM710 497h1v1h-1zM710 514h1v1h-1zM710 531h1v1h-1zM710 548h1v1h-1zM710 565h1v1h-1zM710 582h1v1h-1zM710 599h1v1h-1zM710 616h1v1h-1zM710 633h1v1h-1zM710 650h1v1h-1zM727 89h1v1h-1zM727 106h1v1h-1zM727 123h1v1h-1zM727 140h1v1h-1zM727 157h1v1h-1zM727 174h1v1h-1zM727 191h1v1h-1zM727 208h1v1h-1zM727 225h1v1h-1zM727 242h1v1h-1zM727 259h1v1h-1zM727 276h1v1h-1zM727 293h1v1h-1zM727 310h1v1h-1zM727 327h1v1h-1zM727 344h1v1h-1zM727 361h1v1h-1zM727 378h1v1h-1zM727 395h1v1h-1zM727 412h1v1h-1zM727 429h1v1h-1zM727 446h1v1h-1zM727 463h1v1h-1zM727 480h1v1h-1zM727 497h1v1h-1zM727 514h1v1h-1zM727 531h1v1h-1zM727 548h1v1h-1zM727 565h1v1h-1zM727 582h1v1h-1zM727 599h1v1h-1zM727 616h1v1h-1zM727 633h1v1h-1zM727 650h1v1h-1zM744 89h1v1h-1zM744 106h1v1h-1zM744 123h1v1h-1zM744 140h1v1h-1zM744 157h1v1h-1zM744 174h1v1h-1zM744 191h1v1h-1zM744 208h1v1h-1zM744 225h1v1h-1zM744 242h1v1h-1zM744 259h1v1h-1zM744 276h1v1h-1zM744 293h1v1h-1zM744 310h1v1h-1zM744 327h1v1h-1zM744 344h1v1h-1zM744 361h1v1h-1zM744 378h1v1h-1zM744 395h1v1h-1zM744 412h1v1h-1zM744 429h1v1h-1zM744 446h1v1h-1zM744 463h1v1h-1zM744 480h1v1h-1zM744 497h1v1h-1zM744 514h1v1h-1zM744 531h1v1h-1zM744 548h1v1h-1zM744 565h1v1h-1zM744 582h1v1h-1zM744 599h1v1h-1zM744 616h1v1h-1zM744 633h1v1h-1zM744 650h1v1h-1zM761 89h1v1h-1zM761 106h1v1h-1zM761 123h1v1h-1zM761 140h1v1h-1zM761 157h1v1h-1zM761 174h1v1h-1zM761 191h1v1h-1zM761 208h1v1h-1zM761 225h1v1h-1zM761 242h1v1h-1zM761 259h1v1h-1zM761 276h1v1h-1zM761 293h1v1h-1zM761 310h1v1h-1zM761 327h1v1h-1zM761 344h1v1h-1zM761 361h1v1h-1zM761 378h1v1h-1zM761 395h1v1h-1zM761 412h1v1h-1zM761 429h1v1h-1zM761 446h1v1h-1zM761 463h1v1h-1zM761 480h1v1h-1zM761 497h1v1h-1zM761 514h1v1h-1zM761 531h1v1h-1zM761 548h1v1h-1zM761 565h1v1h-1zM761 582h1v1h-1zM761 599h1v1h-1zM761 616h1v1h-1zM761 633h1v1h-1zM761 650h1v1h-1zM778 89h1v1h-1zM778 106h1v1h-1zM778 123h1v1h-1zM778 140h1v1h-1zM778 157h1v1h-1zM778 174h1v1h-1zM778 191h1v1h-1zM778 208h1v1h-1zM778 225h1v1h-1zM778 242h1v1h-1zM778 259h1v1h-1zM778 276h1v1h-1zM778 293h1v1h-1zM778 310h1v1h-1zM778 327h1v1h-1zM778 344h1v1h-1zM778 361h1v1h-1zM778 378h1v1h-1zM778 395h1v1h-1zM778 412h1v1h-1zM778 429h1v1h-1zM778 446h1v1h-1zM778 463h1v1h-1zM778 480h1v1h-1zM778 497h1v1h-1zM778 514h1v1h-1zM778 531h1v1h-1zM778 548h1v1h-1zM778 565h1v1h-1zM778 582h1v1h-1zM778 599h1v1h-1zM778 616h1v1h-1zM778 633h1v1h-1zM778 650h1v1h-1zM795 89h1v1h-1zM795 106h1v1h-1zM795 123h1v1h-1zM795 140h1v1h-1zM795 157h1v1h-1zM795 174h1v1h-1zM795 191h1v1h-1zM795 208h1v1h-1zM795 225h1v1h-1zM795 242h1v1h-1zM795 259h1v1h-1zM795 276h1v1h-1zM795 293h1v1h-1zM795 310h1v1h-1zM795 327h1v1h-1zM795 344h1v1h-1zM795 361h1v1h-1zM795 378h1v1h-1zM795 395h1v1h-1zM795 412h1v1h-1zM795 429h1v1h-1zM795 446h1v1h-1zM795 463h1v1h-1zM795 480h1v1h-1zM795 497h1v1h-1zM795 514h1v1h-1zM795 531h1v1h-1zM795 548h1v1h-1zM795 565h1v1h-1zM795 582h1v1h-1zM795 599h1v1h-1zM795 616h1v1h-1zM795 633h1v1h-1zM795 650h1v1h-1zM812 89h1v1h-1zM812 106h1v1h-1zM812 123h1v1h-1zM812 140h1v1h-1zM812 157h1v1h-1zM812 174h1v1h-1zM812 191h1v1h-1zM812 208h1v1h-1zM812 225h1v1h-1zM812 242h1v1h-1zM812 259h1v1h-1zM812 276h1v1h-1zM812 293h1v1h-1zM812 310h1v1h-1zM812 327h1v1h-1zM812 344h1v1h-1zM812 361h1v1h-1zM812 378h1v1h-1zM812 395h1v1h-1zM812 412h1v1h-1zM812 429h1v1h-1zM812 446h1v1h-1zM812 463h1v1h-1zM812 480h1v1h-1zM812 497h1v1h-1zM812 514h1v1h-1zM812 531h1v1h-1zM812 548h1v1h-1zM812 565h1v1h-1zM812 582h1v1h-1zM812 599h1v1h-1zM812 616h1v1h-1zM812 633h1v1h-1zM812 650h1v1h-1zM829 89h1v1h-1zM829 106h1v1h-1zM829 123h1v1h-1zM829 140h1v1h-1zM829 157h1v1h-1zM829 174h1v1h-1zM829 191h1v1h-1zM829 208h1v1h-1zM829 225h1v1h-1zM829 242h1v1h-1zM829 259h1v1h-1zM829 276h1v1h-1zM829 293h1v1h-1zM829 310h1v1h-1zM829 327h1v1h-1zM829 344h1v1h-1zM829 361h1v1h-1zM829 378h1v1h-1zM829 395h1v1h-1zM829 412h1v1h-1zM829 429h1v1h-1zM829 446h1v1h-1zM829 463h1v1h-1zM829 480h1v1h-1zM829 497h1v1h-1zM829 514h1v1h-1zM829 531h1v1h-1zM829 548h1v1h-1zM829 565h1v1h-1zM829 582h1v1h-1zM829 599h1v1h-1zM829 616h1v1h-1zM829 633h1v1h-1zM829 650h1v1h-1zM846 89h1v1h-1zM846 106h1v1h-1zM846 123h1v1h-1zM846 140h1v1h-1zM846 157h1v1h-1zM846 174h1v1h-1zM846 191h1v1h-1zM846 208h1v1h-1zM846 225h1v1h-1zM846 242h1v1h-1zM846 259h1v1h-1zM846 276h1v1h-1zM846 293h1v1h-1zM846 310h1v1h-1zM846 327h1v1h-1zM846 344h1v1h-1zM846 361h1v1h-1zM846 378h1v1h-1zM846 395h1v1h-1zM846 412h1v1h-1zM846 429h1v1h-1zM846 446h1v1h-1zM846 463h1v1h-1zM846 480h1v1h-1zM846 497h1v1h-1zM846 514h1v1h-1zM846 531h1v1h-1zM846 548h1v1h-1zM846 565h1v1h-1zM846 582h1v1h-1zM846 599h1v1h-1zM846 616h1v1h-1zM846 633h1v1h-1zM846 650h1v1h-1zM863 89h1v1h-1zM863 106h1v1h-1zM863 123h1v1h-1zM863 140h1v1h-1zM863 157h1v1h-1zM863 174h1v1h-1zM863 191h1v1h-1zM863 208h1v1h-1zM863 225h1v1h-1zM863 242h1v1h-1zM863 259h1v1h-1zM863 276h1v1h-1zM863 293h1v1h-1zM863 310h1v1h-1zM863 327h1v1h-1zM863 344h1v1h-1zM863 361h1v1h-1zM863 378h1v1h-1zM863 395h1v1h-1zM863 412h1v1h-1zM863 429h1v1h-1zM863 446h1v1h-1zM863 463h1v1h-1zM863 480h1v1h-1zM863 497h1v1h-1zM863 514h1v1h-1zM863 531h1v1h-1zM863 548h1v1h-1zM863 565h1v1h-1zM863 582h1v1h-1zM863 599h1v1h-1zM863 616h1v1h-1zM863 633h1v1h-1zM863 650h1v1h-1zM880 89h1v1h-1zM880 106h1v1h-1zM880 123h1v1h-1zM880 140h1v1h-1zM880 157h1v1h-1zM880 174h1v1h-1zM880 191h1v1h-1zM880 208h1v1h-1zM880 225h1v1h-1zM880 242h1v1h-1zM880 259h1v1h-1zM880 276h1v1h-1zM880 293h1v1h-1zM880 310h1v1h-1zM880 327h1v1h-1zM880 344h1v1h-1zM880 361h1v1h-1zM880 378h1v1h-1zM880 395h1v1h-1zM880 412h1v1h-1zM880 429h1v1h-1zM880 446h1v1h-1zM880 463h1v1h-1zM880 480h1v1h-1zM880 497h1v1h-1zM880 514h1v1h-1zM880 531h1v1h-1zM880 548h1v1h-1zM880 565h1v1h-1zM880 582h1v1h-1zM880 599h1v1h-1zM880 616h1v1h-1zM880 633h1v1h-1zM880 650h1v1h-1zM897 89h1v1h-1zM897 106h1v1h-1zM897 123h1v1h-1zM897 140h1v1h-1zM897 157h1v1h-1zM897 174h1v1h-1zM897 191h1v1h-1zM897 208h1v1h-1zM897 225h1v1h-1zM897 242h1v1h-1zM897 259h1v1h-1zM897 276h1v1h-1zM897 293h1v1h-1zM897 310h1v1h-1zM897 327h1v1h-1zM897 344h1v1h-1zM897 361h1v1h-1zM897 378h1v1h-1zM897 395h1v1h-1zM897 412h1v1h-1zM897 429h1v1h-1zM897 446h1v1h-1zM897 463h1v1h-1zM897 480h1v1h-1zM897 497h1v1h-1zM897 514h1v1h-1zM897 531h1v1h-1zM897 548h1v1h-1zM897 565h1v1h-1zM897 582h1v1h-1zM897 599h1v1h-1zM897 616h1v1h-1zM897 633h1v1h-1zM897 650h1v1h-1zM914 89h1v1h-1zM914 106h1v1h-1zM914 123h1v1h-1zM914 140h1v1h-1zM914 157h1v1h-1zM914 174h1v1h-1zM914 191h1v1h-1zM914 208h1v1h-1zM914 225h1v1h-1zM914 242h1v1h-1zM914 259h1v1h-1zM914 276h1v1h-1zM914 293h1v1h-1zM914 310h1v1h-1zM914 327h1v1h-1zM914 344h1v1h-1zM914 361h1v1h-1zM914 378h1v1h-1zM914 395h1v1h-1zM914 412h1v1h-1zM914 429h1v1h-1zM914 446h1v1h-1zM914 463h1v1h-1zM914 480h1v1h-1zM914 497h1v1h-1zM914 514h1v1h-1zM914 531h1v1h-1zM914 548h1v1h-1zM914 565h1v1h-1zM914 582h1v1h-1zM914 599h1v1h-1zM914 616h1v1h-1zM914 633h1v1h-1zM914 650h1v1h-1zM931 89h1v1h-1zM931 106h1v1h-1zM931 123h1v1h-1zM931 140h1v1h-1zM931 157h1v1h-1zM931 174h1v1h-1zM931 191h1v1h-1zM931 208h1v1h-1zM931 225h1v1h-1zM931 242h1v1h-1zM931 259h1v1h-1zM931 276h1v1h-1zM931 293h1v1h-1zM931 310h1v1h-1zM931 327h1v1h-1zM931 344h1v1h-1zM931 361h1v1h-1zM931 378h1v1h-1zM931 395h1v1h-1zM931 412h1v1h-1zM931 429h1v1h-1zM931 446h1v1h-1zM931 463h1v1h-1zM931 480h1v1h-1zM931 497h1v1h-1zM931 514h1v1h-1zM931 531h1v1h-1zM931 548h1v1h-1zM931 565h1v1h-1zM931 582h1v1h-1zM931 599h1v1h-1zM931 616h1v1h-1zM931 633h1v1h-1zM931 650h1v1h-1z" fill="#c8c8c8"/></svg>
<svg style="left:0;top:0" width="960" height="691"><path d="M165.5 157V583" stroke="#e8e8b8" stroke-width="1"/><path d="M165 157.5H812" stroke="#e6df70" stroke-width="1"/><path d="M812.5 157V583" stroke="#e6e0a0" stroke-width="1"/><path d="M165 582.75H812" stroke="#a8a878" stroke-width="1.5"/><rect x="162.5" y="154.5" width="6" height="6" fill="none" stroke="#e8e8b0"/><rect x="809" y="154" width="6" height="6" fill="#f4ec30"/><rect x="162" y="580" width="6" height="6" fill="#f4ec30"/><rect x="809" y="580" width="6" height="6" fill="#f4ec30"/></svg>
<div class="a" style="left:940px;top:82px;width:17px;height:575px;background:#fff"></div>
<div class="a" style="left:957px;top:80px;width:3px;height:598px;background:#f4f1e4;border-left:1px solid #a8a494"></div>
<div class="a" style="left:959px;top:48px;width:1px;height:31px;background:#b8b4a4"></div>
<div class="btn" style="left:941px;top:82px;width:16px;height:16px"></div>
<div class="btn" style="left:941px;top:641px;width:16px;height:16px"></div>
<div class="btn" style="left:941px;top:242px;width:16px;height:46px"></div>
<div class="a" style="left:37px;top:657px;width:903px;height:17px;background:#fff"></div>
<div class="btn" style="left:37px;top:657px;width:16px;height:17px"></div>
<div class="btn" style="left:924px;top:657px;width:16px;height:17px"></div>
<div class="btn" style="left:287px;top:657px;width:112px;height:17px"></div>
<div class="a" style="left:940px;top:657px;width:17px;height:17px;background:#f4f1e4"></div>
<svg style="left:0;top:0" width="960" height="691"><path d="M944.5 92h8.5l-4.25-4.25z" fill="#000"/><path d="M945 647h8l-4 4z" fill="#000"/><path d="M47 661v8l-4-4z" fill="#000"/><path d="M930 661v8l4-4z" fill="#000"/></svg>
<div class="a" style="left:0;top:674px;width:960px;height:1px;background:#d6d2bf"></div>
<div class="a" style="left:36px;top:678px;width:137px;height:20px;border-top:1px solid #aca899;border-left:1px solid #aca899"></div>
<div class="t" style="left:45px;top:682px;font-size:11px;color:#111;transform:scaleX(0.97);transform-origin:0 0">X: -0.075</div>
<div class="t" style="left:113px;top:682px;font-size:11px;color:#111;transform:scaleX(0.9);transform-origin:0 0">Y: 0.150</div>
<div class="a" style="left:181px;top:678px;width:110px;height:20px;border-top:1px solid #8a8676;border-left:1px solid #8a8676;box-shadow:inset 1px 1px 0 #333;background:#fff"></div>
<div class="t" style="left:187px;top:682px;font-size:11px;color:#111;letter-spacing:0.2px">Snap: 0.025"</div>
<svg style="left:278px;top:686px" width="8" height="5"><path d="M0 0h8l-4 4z" fill="#000"/></svg>
<div class="a" style="left:298px;top:678px;width:662px;height:20px;border-top:1px solid #aca899;border-left:1px solid #aca899"></div>
<div class="a" style="left:2px;top:81px;width:31px;height:30px;background:#fff;border-top:2px solid #8a8680;border-left:2px solid #8a8680"></div>
<div class="lb" style="top:111px"></div>
<div class="lb" style="top:141px"></div>
<div class="lb" style="top:171px"></div>
<div class="lb" style="top:201px"></div>
<div class="lb" style="top:231px"></div>
<div class="lb" style="top:261px"></div>
<div class="lb" style="top:291px"></div>
<div class="lb" style="top:321px"></div>
<div class="lb" style="top:351px"></div>
<div class="lb" style="top:381px"></div>
<div class="lb" style="top:411px"></div>
<div class="lb" style="top:441px"></div>
<div class="lb" style="top:471px"></div>
<div class="a" style="left:33px;top:80px;width:1px;height:596px;background:#c8c4b4"></div>
<div class="a" style="left:34px;top:80px;width:3px;height:596px;background:#fdfcf6"></div>
<div class="lb" style="top:591px;height:21px;border-top:1px solid #111;border-left:1px solid #111;border-right:1px solid #fff;border-bottom:1px solid #fff;box-shadow:inset 1px 1px 0 #8a8676"></div>
<div class="lb" style="top:613px;height:21px;border-top:1px solid #111;border-left:1px solid #111;border-right:1px solid #fff;border-bottom:1px solid #fff;box-shadow:inset 1px 1px 0 #8a8676"></div>
<div class="lb" style="top:634px;height:21px;border-top:1px solid #111;border-left:1px solid #111;border-right:1px solid #fff;border-bottom:1px solid #fff;box-shadow:inset 1px 1px 0 #8a8676"></div>
<div class="lb" style="top:656px;height:21px;border-top:1px solid #111;border-left:1px solid #111;border-right:1px solid #fff;border-bottom:1px solid #fff;box-shadow:inset 1px 1px 0 #8a8676"></div>
<div class="a" style="left:4px;top:589px;width:27px;height:1px;background:#c8c4b4"></div>

<svg style="left:0;top:0" width="960" height="691">
<!-- open folder -->
<path d="M6.5 60.5h3l1 1h4v3h-6l-2 5z" fill="#f0f040" stroke="#222" stroke-width="0.8"/>
<path d="M9 64.5h11.5l-4.5 5.2H6z" fill="#7a9a1a" stroke="#111" stroke-width="0.9"/>
<path d="M14 59.5c1-2.5 4-2.5 5 0" fill="none" stroke="#333" stroke-width="1"/>
<path d="M18 58.5l2.5 0l-1 3z" fill="#111"/>
<!-- save -->
<rect x="32.5" y="57.5" width="12.5" height="13" fill="#3a5a20" stroke="#111" stroke-width="1"/>
<rect x="34.5" y="58" width="8.5" height="5.5" fill="#f4f0f0"/>
<rect x="34.5" y="65" width="8.5" height="5.5" fill="#050505"/>
<rect x="40" y="66.5" width="2" height="3" fill="#eee"/>
<!-- undo -->
<path d="M67.5 64.5c3-4 8-5 9.5-2.5s-1 4-1.5 5" fill="none" stroke="#111" stroke-width="1.2"/>
<path d="M65 61.5l0.5 5h4.5z" fill="#10208a"/>
<!-- zoom in / out / full / P -->
<g fill="none" stroke="#111" stroke-width="1.2">
<circle cx="100.5" cy="61.5" r="4.6"/><path d="M98 61.5h5M100.5 59v5"/>
<circle cx="126" cy="61.5" r="4.6" stroke="#222"/><path d="M123.5 61.5h5"/>
<circle cx="151.6" cy="60.8" r="4.8"/>
<circle cx="176.6" cy="60.8" r="4.8"/>
</g>
<rect x="149.3" y="58.6" width="4.6" height="4.5" fill="#111"/>
<path d="M175 64V57.8h2.2a1.6 1.6 0 0 1 0 3.4H175" fill="none" stroke="#111" stroke-width="1.1"/>
<g stroke="#333" stroke-width="2.6" stroke-linecap="round">
<path d="M105 66l5 4.6M130.5 66l5 4.6M156 66l4.6 4.4M181 66l4.6 4.4"/>
</g>
<!-- properties -->
<rect x="205.5" y="60.5" width="11" height="10" rx="1.5" fill="#fbf8ec" stroke="#222" stroke-width="1.2"/>
<path d="M207.5 66.5h1M209.5 66.5h5M207.5 68.5h1M209.5 68.5h5" stroke="#222" stroke-width="0.9"/>
<path d="M207 63l4-4.5 3 3.5" fill="none" stroke="#777" stroke-width="2"/>
<path d="M211 58.5h6" stroke="#666" stroke-width="1.5"/>
<path d="M217 56.5l3 2-3 4z" fill="#111"/>
<!-- component triangle -->
<path d="M232.5 59v13l13-6.5z" fill="#fbf8ec" stroke="#111" stroke-width="1.1" stroke-dasharray="2 1"/>
<path d="M229 62h3.5M229 69.5h3.5" stroke="#111" stroke-width="1.1"/>
<path d="M234.5 61l3-3 3 3" fill="none" stroke="#777" stroke-width="2"/>
<path d="M238 58h5" stroke="#666" stroke-width="1.5"/>
<path d="M243.5 56.5l3 2-3 4z" fill="#111"/>
<!-- layer up -->
<path d="M262.5 59.6h16.5" stroke="#e02010" stroke-width="2"/>
<path d="M266 70.5V63.5M275.6 70.5V63.5" stroke="#111" stroke-width="2"/>
<path d="M262.9 66.2l3.1-5.6 3.1 5.6zM272.5 66.2l3.1-5.6 3.1 5.6z" fill="#111"/>
<!-- layer down -->
<path d="M288 68.8h16" stroke="#5a9a40" stroke-width="1.6"/>
<path d="M291.6 57.3V64.5M301 57.3V64.5" stroke="#111" stroke-width="2"/>
<path d="M288.5 61.6l3.1 5.6 3.1-5.6zM297.9 61.6l3.1 5.6 3.1-5.6z" fill="#111"/>
<!-- move -->
<path d="M329.5 58c3 1 6 3.5 6.5 5.5-0.5 2.5-3.5 5.5-6.5 6.5-3-1-6-3.5-7-6.5 1-2.5 4-5 7-5.5z" fill="none" stroke="#777" stroke-width="0.9"/>
<path d="M327.3 59.5l2.2-3.8 2.2 3.8zM325.5 61l-3.8 2.2 3.8 2.2zM333.5 61.3l3.8 2.2-3.8 2.2zM327 68.2l2.3 3.8 2.3-3.8z" fill="#111"/>
<path d="M354.8 58c3 1 6 3.5 6.5 5.5-0.5 2.5-3.5 5.5-6.5 6.5-3-1-6-3.5-7-6.5 1-2.5 4-5 7-5.5z" fill="none" stroke="#777" stroke-width="0.9"/>
<path d="M352.6 59.5l2.2-3.8 2.2 3.8zM350.8 61l-3.8 2.2 3.8 2.2zM358.8 61.3l3.8 2.2-3.8 2.2zM352.3 68.2l2.3 3.8 2.3-3.8z" fill="#111"/>
<path d="M352.4 67v-3.2l2.4-2.4 2.4 2.4V67M352.4 64.8h4.8" fill="none" stroke="#222" stroke-width="1.1"/>

<!-- LEFT TOOLBAR -->
<!-- arrow -->
<path d="M12.5 86.5V101.5L15.8 98.2L19.5 105.8L22 104.6L18.5 97H23.5Z" fill="#fff" stroke="#111" stroke-width="1.1" stroke-linejoin="miter"/>
<!-- zoom select -->
<rect x="9.5" y="117.5" width="16" height="17" fill="none" stroke="#3060e0" stroke-width="1.2" stroke-dasharray="2.5 1.5"/>
<circle cx="12.5" cy="120.5" r="4.5" fill="#fff" stroke="#111" stroke-width="1.2"/>
<path d="M16.5 124.5l5 5" stroke="#333" stroke-width="2.4" stroke-linecap="round"/>
<!-- pad -->
<circle cx="12" cy="155" r="4.3" fill="#e01000"/><circle cx="12" cy="155" r="1.4" fill="#111"/>
<rect x="21" y="150.5" width="3" height="9" fill="#c01000"/>
<!-- IC -->
<path d="M7.5 175h7l1.5 2 1.5-2h7v20.5h-17z" fill="#fbf8ec" stroke="#111" stroke-width="1.2"/>
<g fill="#c01a00">
<rect x="10.5" y="177.5" width="2" height="2"/><rect x="10.5" y="182" width="2" height="2"/><rect x="10.5" y="187" width="2" height="2"/><rect x="10.5" y="191.5" width="2" height="2"/>
<rect x="19.5" y="177.5" width="2" height="2"/><rect x="19.5" y="182" width="2" height="2"/><rect x="19.5" y="187" width="2" height="2"/><rect x="19.5" y="191.5" width="2" height="2"/>
</g>
<!-- trace -->
<path d="M10.5 221.5L22.8 208.8" stroke="#c01a00" stroke-width="1.6"/>
<circle cx="10.5" cy="221.5" r="2" fill="#888"/><circle cx="22.8" cy="208.8" r="2" fill="#888"/>
<!-- corner -->
<path d="M10 236v14M10 250.5h15" stroke="#999" stroke-width="2.2"/>
<rect x="8" y="248" width="4" height="4" fill="#e01000"/>
<!-- line -->
<path d="M12 270l9 9" stroke="#c01a00" stroke-width="1.6"/>
<circle cx="9.5" cy="268" r="2" fill="#888"/><circle cx="22" cy="281.5" r="2" fill="#888"/>
<!-- A -->
<path d="M12 312.5V302l4.3-4 4.4 4v10.5M12 308h8.7" fill="none" stroke="#d01a00" stroke-width="1.5"/>
<!-- layers -->
<rect x="14" y="328" width="9.8" height="10" fill="#1f7a1f" stroke="#111" stroke-width="0.9"/>
<rect x="8.5" y="332" width="11" height="11" fill="#f02000" stroke="#222" stroke-width="0.9"/>
<!-- green board -->
<path d="M6 359.5l1.5-1.5h19l1.5 1.5v9l-1.5 1.5h-1v2h-10v-2h-8l-1.5-1.5z" fill="#1a6a1a" stroke="#111" stroke-width="1"/>
<path d="M9 361.5h8l2 2h6.5M9 364h7.5l2 2h7" fill="none" stroke="#111" stroke-width="1"/>
<!-- circle -->
<circle cx="16.5" cy="394.8" r="8.2" fill="none" stroke="#d01a00" stroke-width="2" stroke-dasharray="10.8 2.08" stroke-dashoffset="-1.04" transform="rotate(-90 16.5 394.8)"/>
<!-- rect -->
<path d="M8 418v14M25 418v14M8 418h17M8 432h17" stroke="#c09080" stroke-width="1"/>
<g fill="#e01000"><rect x="5.6" y="415.6" width="4.4" height="4.4"/><rect x="23" y="415.6" width="4.4" height="4.4"/><rect x="5.6" y="429.6" width="4.4" height="4.4"/><rect x="23" y="429.6" width="4.4" height="4.4"/></g>
<!-- query -->
<circle cx="12" cy="455.5" r="4.3" fill="#e01000"/><circle cx="12" cy="455.5" r="1.5" fill="#111"/>
<text x="16.3" y="464" font-family="Liberation Serif" font-weight="bold" font-size="23" fill="#d01a00">?</text>
<!-- network -->
<path d="M8.8 478H13v4.8h8.7M16.3 476V494M16.3 476h9.2M7.8 491v-4.5h8.5M16.3 489.3h9.2" fill="none" stroke="#888" stroke-width="0.9"/>
<g fill="#e01000"><circle cx="8.8" cy="478" r="2.2"/><circle cx="25.5" cy="476" r="2.2"/><circle cx="21.7" cy="482.8" r="2.2"/><circle cx="25.5" cy="489.3" r="2.2"/><circle cx="7.8" cy="491" r="2.2"/><circle cx="16.3" cy="494" r="2.2"/></g>
<defs><pattern id="chk" width="2" height="2" patternUnits="userSpaceOnUse"><rect width="2" height="2" fill="#ecdcd4"/><rect width="1" height="1" fill="#b07060"/><rect x="1" y="1" width="1" height="1" fill="#b07060"/></pattern></defs>
<!-- eyes -->
<g fill="none" stroke="#111" stroke-width="1.1">
<path d="M13 595l-6.5 4 6.5 4M13 594.5v9"/>
<path d="M13 617l-6.5 4 6.5 4M13 616.5v9"/>
<path d="M13 643l-6.5 4 6.5 4M13 642.5v9"/>
</g>
<g fill="#111"><circle cx="12.3" cy="599" r="1.4"/><circle cx="12.3" cy="621" r="1.4"/><circle cx="12.3" cy="647" r="1.4"/></g>
<rect x="17" y="597.5" width="12" height="2.5" fill="#f8f000"/><rect x="17" y="600" width="12" height="6" fill="url(#chk)"/>
<rect x="17" y="619" width="12" height="2.5" fill="#c02010"/><rect x="17" y="621.5" width="12" height="5.5" fill="url(#chk)"/>
<rect x="17" y="641" width="12" height="5" fill="url(#chk)"/><rect x="17" y="646" width="12" height="2" fill="#40a040"/>
<!-- snap icon -->
<path d="M6 671h24M20 659v12" stroke="#bbb" stroke-width="1"/>
<path d="M13 664l3.2 3.2" stroke="#111" stroke-width="1.5"/><path d="M18.3 669l-3.8-0.6 3.2-3.2z" fill="#111"/>
<circle cx="9.5" cy="661.5" r="2" fill="#e01000"/><circle cx="20" cy="671" r="2.2" fill="#e01000"/>
</svg>

<div class="a" style="left:177px;top:179px;width:604px;height:374px;background:#0a1a90;border-radius:6px 6px 0 0"></div>
<div class="a" style="left:177px;top:200px;width:3px;height:351px;background:linear-gradient(90deg,#1035c0,#2a5ae8)"></div>
<div class="a" style="left:778px;top:200px;width:3px;height:351px;background:linear-gradient(90deg,#1a48d8,#0a28a8)"></div>
<div class="a" style="left:177px;top:179px;width:604px;height:27px;border-radius:6px 6px 0 0;background:linear-gradient(#2a70e0 0px,#4c98ff 1px,#3a88fa 3px,#0a5ae8 5px,#0050dc 8px,#0056e6 13px,#0062f4 18px,#0062f4 23px,#0040c4 25px,#0034b4 27px)"></div>
<div class="t" style="left:183.4px;top:188px;font-size:13px;font-weight:bold;color:#fff;transform:scaleX(0.885);transform-origin:0 0;word-spacing:1.6px">Component manager</div>
<div class="a" style="left:180px;top:206px;width:598px;height:344px;background:#fbf8ea;box-shadow:inset 1px -1px 0 #fff"></div>
<div class="a" style="left:187px;top:219px;width:374px;height:286px;border:1px solid #d0d0bf;border-radius:3px"></div>
<div class="a" style="left:192px;top:212px;width:140px;height:14px;background:#fbf8ea"></div>
<div class="t" style="left:195px;top:215px;font-size:11px;font-weight:bold;color:#111">Show PCB components:</div>
<svg style="left:0;top:0" width="960" height="691"><circle cx="207" cy="235" r="5" fill="#fff"/><path d="M203.5 238.5A5 5 0 0 1 210.5 231.5" fill="none" stroke="#9a988c" stroke-width="1.2"/><circle cx="207" cy="235" r="2" fill="#111"/><circle cx="207" cy="252" r="5" fill="#fff"/><path d="M203.5 255.5A5 5 0 0 1 210.5 248.5" fill="none" stroke="#9a988c" stroke-width="1.2"/><circle cx="354" cy="244" r="5" fill="#fff"/><path d="M350.5 247.5A5 5 0 0 1 357.5 240.5" fill="none" stroke="#9a988c" stroke-width="1.2"/></svg>
<div class="t" style="left:219px;top:232px;font-size:11px;font-weight:bold;color:#111;letter-spacing:-0.1px">Library components</div>
<div class="t" style="left:219px;top:249px;font-size:11px;font-weight:bold;color:#111;letter-spacing:-0.1px">Custom components</div>
<div class="t" style="left:366px;top:241px;font-size:11px;font-weight:bold;color:#111;letter-spacing:-0.1px">Favorite components</div>
<div class="a" style="left:196px;top:267px;width:356px;height:198px;background:#fff;border-top:2px solid #8a877a;border-left:2px solid #8a877a;border-right:1px solid #f0eee4;border-bottom:1px solid #f0eee4"></div>
<div class="li" style="top:269.0px">Cap - 0.1uf axial ceramic, decoupling  (DigiKey 1210PHCT-ND)</div>
<div class="li" style="top:281.2px">Cap - Axial electrolytic - Lead spacing  0.5 inch</div>
<div class="li" style="top:293.4px">Cap - Axial electrolytic - Lead spacing  0.6 inch</div>
<div class="li" style="top:305.6px">Cap - Axial electrolytic - Lead spacing  0.7 inch</div>
<div class="li" style="top:317.8px">Cap - Axial electrolytic - Lead spacing  0.8 inch</div>
<div class="li" style="top:330.0px">Cap - Axial electrolytic - Lead spacing  0.9 inch</div>
<div class="li" style="top:342.2px">Cap - Axial electrolytic - Lead spacing  1.2 inch</div>
<div class="li" style="top:354.4px">Cap - Axial electrolytic - Lead spacing  1.4 inch</div>
<div class="li" style="top:366.6px">Cap - Axial electrolytic - Lead spacing  1.8 inch</div>
<div class="li" style="top:378.8px">Cap - Lead spacing  0.1 inch  (2.5mm)</div>
<div class="li" style="top:391.0px">Cap - Lead spacing  0.177 inch  (4.5mm)</div>
<div class="li" style="top:403.2px">Cap - Lead spacing  0.2 inch  (5mm)</div>
<div class="li" style="top:415.4px">Cap - Lead spacing  0.25 inch</div>
<div class="li" style="top:427.6px">Cap - Lead spacing  0.3 inch  (7.5mm)</div>
<div class="li" style="top:439.8px">Cap - Lead spacing  0.375 inch</div>
<div class="li" style="top:452.0px">Cap - Lead spacing  0.4 inch  (10mm)</div>
<div class="a" style="left:536px;top:270px;width:13px;height:12px;background:#c8d6f8;border-radius:2px"></div>
<svg style="left:538px;top:272px" width="9" height="7"><path d="M0.8 5.8l3.7-3.7 3.7 3.7" stroke="#4d6185" stroke-width="2" fill="none"/></svg>
<div class="a" style="left:536px;top:285px;width:13px;height:7px;background:#b8c8f0;border-radius:1px"></div>
<div class="a" style="left:536px;top:448px;width:13px;height:14px;background:#c8d6f8;border-radius:2px"></div>
<svg style="left:538px;top:451px" width="9" height="7"><path d="M0.8 1.2l3.7 3.7 3.7-3.7" stroke="#4d6185" stroke-width="2" fill="none"/></svg>
<svg style="left:0;top:0" width="960" height="691"><path d="M545.5 288.5V303.5L549 300.2L552 307.3L554.3 306.3L551.5 299.3H556.3Z" fill="#fff" stroke="#111" stroke-width="1.1"/></svg>
<div class="btn" style="left:195px;top:473px;width:112px;height:23px;line-height:21px">Add to favorites</div>
<div class="btn" style="left:318px;top:473px;width:113px;height:23px;line-height:21px">Find...</div>
<div class="btn" style="left:443px;top:473px;width:109px;height:23px;line-height:21px;color:#aca899">Find next</div>
<div class="t" style="left:271px;top:522px;font-size:11px;font-weight:bold;color:#111">Orientation:</div>
<div class="a" style="left:342px;top:515px;width:30px;height:27px;background:#fff;border-top:1px solid #6e6b5c;border-left:1px solid #6e6b5c"></div>
<div class="btn" style="left:372px;top:515px;width:30px;height:27px"></div>
<div class="btn" style="left:401px;top:515px;width:30px;height:27px"></div>
<div class="btn" style="left:431px;top:515px;width:30px;height:27px"></div>
<svg style="left:0;top:0" width="960" height="691"><g fill="none" stroke="#111" stroke-width="1.1"><circle cx="356.7" cy="523.3" r="2.6"/><path d="M356.7 526v5M351.5 529.5h10.2M356.7 531l-4.2 5M356.7 531l4.3 5"/><circle cx="380.7" cy="528.7" r="2.6"/><path d="M383.3 528.7h2.7M386 523v11.3M386 528.7l6.8-5M386 528.7l6.8 5.2"/><circle cx="415.3" cy="533.3" r="2.6"/><path d="M415.3 530.7V526M410 527.5h10.6M415.3 526l-5-5M415.3 526l5-5"/><circle cx="451.3" cy="528.7" r="2.6"/><path d="M448.7 528.7h-3.7M445 523v11.3M445 528.7l-6-5M445 528.7l-6 5.2"/></g><g fill="#111"><circle cx="356.7" cy="523.3" r="0.8"/><circle cx="380.7" cy="528.7" r="0.8"/><circle cx="415.3" cy="533.3" r="0.8"/><circle cx="451.3" cy="528.7" r="0.8"/></g></svg>
<div class="a" style="left:570px;top:219px;width:199px;height:286px;background:#000;border-top:1px solid #8a877a;border-left:1px solid #8a877a;border-right:1px solid #fff;border-bottom:1px solid #fff"></div>
<svg style="left:0;top:0" width="960" height="691"><path d="M591 319.5A84 84 0 1 1 591 404.5Z" fill="none" stroke="#ffff00" stroke-width="3.6"/><rect x="605.5" y="304" width="34" height="34" fill="#c41a00"/><circle cx="622.5" cy="321" r="8.5" fill="#000"/><circle cx="705" cy="321" r="12.5" fill="none" stroke="#c41a00" stroke-width="8.2"/><circle cx="622.5" cy="403.3" r="12.5" fill="none" stroke="#c41a00" stroke-width="8.2"/><circle cx="705" cy="403.3" r="12.5" fill="none" stroke="#c41a00" stroke-width="8.2"/></svg>
<div class="btn" style="left:571px;top:515px;width:93px;height:29px;line-height:12px;padding-top:2px">Insert component<br>into PCB</div>
<div class="btn" style="left:681px;top:515px;width:87px;height:29px;line-height:27px">Done</div>
</body></html>
